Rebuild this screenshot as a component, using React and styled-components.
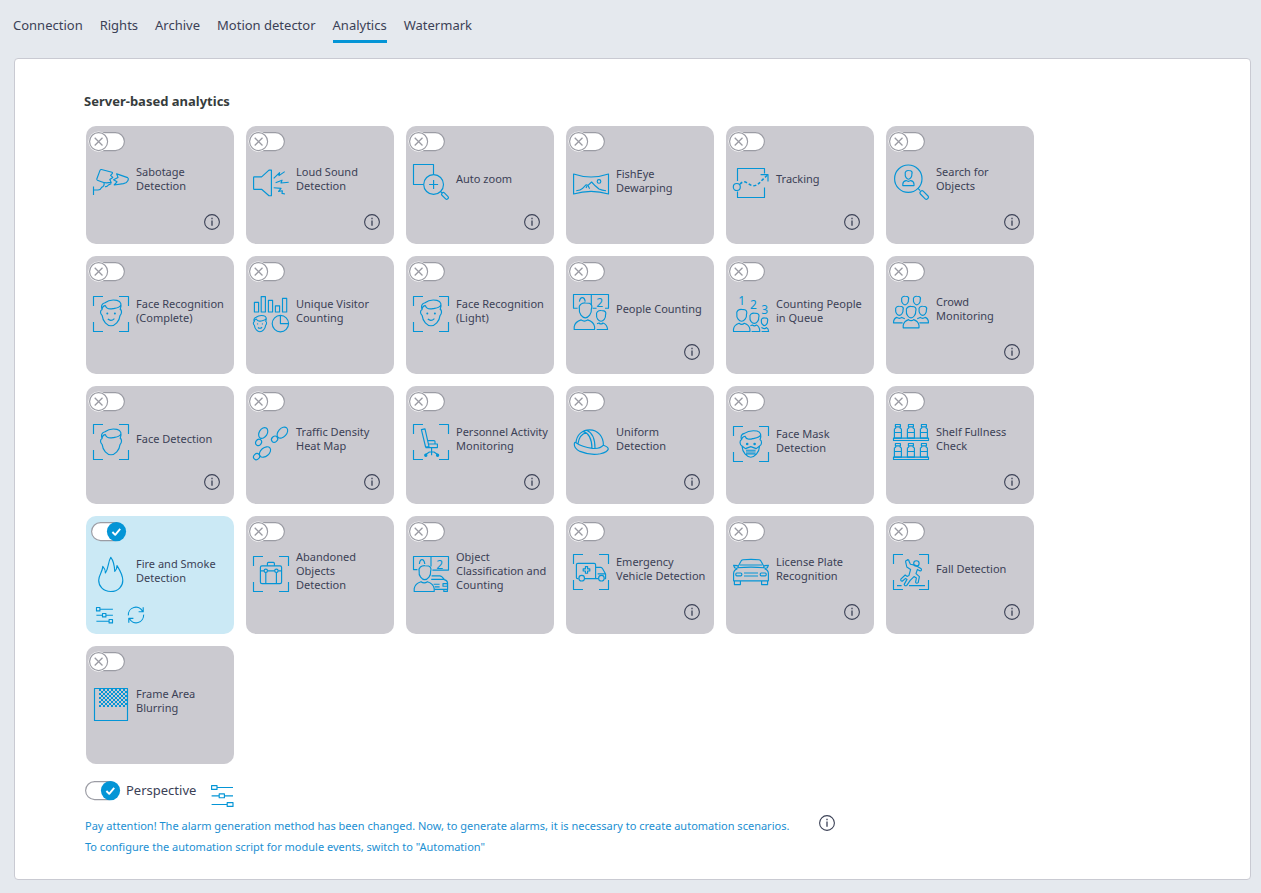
import React, { useState } from "react";
import styled, { createGlobalStyle } from "styled-components";

const color = {
  page: "#e5e9ee",
  panel: "#ffffff",
  border: "#c9cad2",
  card: "#cbcad0",
  cardOn: "#cbe9f5",
  blue: "#0495d6",
  link: "#1b8fd2",
  text: "#3b4156",
  heading: "#363c3c",
  grey: "#9b9ca4",
};

const GlobalStyle = createGlobalStyle`
  *, *::before, *::after { box-sizing: border-box; }
  body {
    margin: 0;
    background: ${color.page};
    color: ${color.text};
    font-family: "Noto Sans", "Open Sans", sans-serif;
    font-size: 13px;
  }
`;

const Page = styled.div`
  display: flex;
  flex-direction: column;
  padding-bottom: 13px;
`;

const Tabs = styled.nav`
  display: flex;
  gap: 17px;
  padding: 10px 13px 15px;
`;

const Tab = styled.a`
  border-bottom: 3px solid ${(p) => (p.$active ? color.blue : "transparent")};
  color: inherit;
  line-height: 30px;
  text-decoration: none;
`;

const Panel = styled.main`
  margin: 0 10px 0 14px;
  padding: 32px 69px 22px;
  background: ${color.panel};
  border: 1px solid ${color.border};
  border-radius: 4px;
`;

const Heading = styled.h1`
  margin: 0 0 15px;
  color: ${color.heading};
  font-size: 13px;
  font-weight: 700;
  line-height: 20px;
`;

const Grid = styled.ul`
  display: grid;
  grid-template-columns: repeat(6, 148px);
  grid-auto-rows: 118px;
  gap: 12px;
  margin: 0;
  padding: 0 2px;
  list-style: none;
`;

const Card = styled.li`
  display: flex;
  flex-direction: column;
  padding: 5px 0 0 2px;
  border-radius: 10px;
  background: ${(p) => (p.$on ? color.cardOn : color.card)};
`;

const CardBody = styled.label`
  display: flex;
  align-items: center;
  gap: 7px;
  min-height: 48px;
  margin-top: ${(p) => (p.$low ? 8 : 6)}px;
  padding-left: 5px;
`;

const CardLabel = styled.span`
  padding-bottom: 6px;
  font-size: 11px;
  line-height: 14px;
  white-space: pre;
`;

const CardFooter = styled.div`
  display: flex;
  justify-content: ${(p) => (p.$tools ? "flex-start" : "flex-end")};
  gap: 14px;
  margin-top: auto;
  padding: ${(p) => (p.$tools ? "0 7px 10px" : "0 13px 13px")};
`;

const IconButton = styled.button`
  display: block;
  padding: 0;
  border: 0;
  background: none;
  color: ${(p) => (p.$dark ? color.text : color.blue)};
  cursor: pointer;
`;

const Svg = styled.svg`
  display: block;
  flex: none;
  overflow: visible;
  fill: none;
  stroke: currentColor;
  stroke-width: 1.15;
  stroke-linejoin: round;
`;

const CardIcon = styled(Svg)`
  color: ${color.blue};
  text {
    fill: currentColor;
    stroke: none;
    font-size: 12px;
    text-anchor: middle;
  }
`;

const Switch = styled.span`
  display: grid;
  width: 38px;
  height: 21px;
  & > * { grid-area: 1 / 1; }
`;

const SwitchInput = styled.input`
  appearance: none;
  width: 38px;
  height: 21px;
  margin: 0;
  cursor: pointer;
`;

const SwitchFace = styled(Svg)`
  pointer-events: none;
`;

const PerspectiveRow = styled.div`
  display: flex;
  align-items: flex-start;
  height: 28px;
  margin: 16px 0 0 -2px;
`;

const PerspectiveLabel = styled.label`
  padding: 0 15px 0 6px;
  line-height: 21px;
`;

const PerspectiveTool = styled.div`
  padding-top: 5px;
`;

const Notice = styled.div`
  display: flex;
  align-items: flex-start;
  gap: 29px;
  margin-top: 6px;
  padding-left: 1px;
`;

const NoticeText = styled.p`
  margin: 0;
  padding-top: 1px;
  color: ${color.link};
  font-size: 11px;
  line-height: 21px;
`;

const NoticeLink = styled.a`
  color: inherit;
  text-decoration: none;
`;

function Toggle({ id, checked, onChange }) {
  return (
    <Switch>
      <SwitchInput id={id} type="checkbox" role="switch" checked={checked} onChange={onChange} />
      <SwitchFace width="38" height="21" viewBox="0 0 38 21" aria-hidden="true">
        <rect x="3.6" y="1.6" width="32.8" height="18" rx="9" fill="#fff" stroke={color.grey} />
        {checked ? (
          <>
            <circle cx="28.5" cy="10.6" r="9.6" fill={color.blue} stroke="none" />
            <path d="M24.4 11l2.8 2.8 5-6" stroke="#fff" strokeWidth="1.9" />
          </>
        ) : (
          <>
            <circle cx="10.6" cy="10.6" r="10.2" fill="#fff" stroke="none" />
            <circle cx="10.6" cy="10.6" r="9" fill="#fff" stroke={color.grey} />
            <path d="M6.7 6.7l7.8 7.8M14.5 6.7l-7.8 7.8" stroke={color.grey} strokeWidth="1.3" />
          </>
        )}
      </SwitchFace>
    </Switch>
  );
}

function InfoIcon() {
  return (
    <Svg width="18" height="18" viewBox="0 0 18 18" aria-hidden="true">
      <circle cx="9" cy="9" r="7.4" strokeWidth="1.1" />
      <path d="M9 7.6v5.2M9 4.8v1.5" strokeWidth="1.3" />
    </Svg>
  );
}

function SlidersIcon() {
  return (
    <Svg width="18" height="18" viewBox="0 0 18 18" aria-hidden="true">
      <path d="M1.5 1.5h3.4v3.4H1.5zM4.9 3.2h13M1.4 9.2h6.1M7.5 7.5h3.4v3.4H7.5zM10.9 9.2h7M1.4 15.2h12.7M14.1 13.5h3.4v3.4h-3.4z" />
    </Svg>
  );
}

function WideSlidersIcon() {
  return (
    <Svg width="23" height="22" viewBox="0 0 23 22" aria-hidden="true">
      <path d="M.6.6h5.4v3.8H.6zM6 2.5h16M.6 10.8h7.6M8.2 8.9h5.2v3.8H8.2zM13.4 10.8H22M.6 19.5h15.6M16.2 17.6H22v3.8h-5.8z" />
    </Svg>
  );
}

function RefreshIcon() {
  return (
    <Svg width="18" height="18" viewBox="0 0 18 18" aria-hidden="true">
      <path d="M1.4 9.4A7.5 7.5 0 0 1 15.6 5.4M16.2 1.2v4.5h-4.6M16.6 8.6A7.5 7.5 0 0 1 2.4 12.6M1.8 16.8v-4.5h4.6" />
    </Svg>
  );
}

const Brackets = () => <path d="M.5 10V.5H10M26 .5h9.5V10M35.5 26v9.5H26M10 35.5H.5V26" />;

function Head({ x, y, w, h }) {
  const at = (u, v) => `${(x + u * w).toFixed(2)} ${(y + v * h).toFixed(2)}`;
  return (
    <path
      d={`M${at(0.06, 0.44)}C${at(-0.02, 0.16)} ${at(0.24, 0.02)} ${at(0.5, 0.03)}C${at(0.62, 0.03)} ${at(0.72, 0.04)} ${at(0.8, 0.06)}C${at(0.98, 0.12)} ${at(1.02, 0.28)} ${at(0.95, 0.44)}C${at(1, 0.72)} ${at(0.72, 1)} ${at(0.5, 1)}S${at(0, 0.72)} ${at(0.06, 0.44)}Z`}
    />
  );
}

function Bust({ x, y, w, h }) {
  const at = (u, v) => `${(x + u * w).toFixed(2)} ${(y + v * h).toFixed(2)}`;
  return (
    <path
      d={`M${at(0, 1)}L${at(0, 0.72)}Q${at(0.04, 0.22)} ${at(0.34, 0.03)}Q${at(0.5, 0.28)} ${at(0.66, 0.03)}Q${at(0.96, 0.22)} ${at(1, 0.72)}L${at(1, 1)}Z`}
    />
  );
}

const FaceOutline = () => (
  <path d="M9 13.8C7.8 10.5 8.6 7.4 12 6.8C15 4.4 20 3.6 24 4.4C28 5.2 29 8.6 27.2 13.4C29 14 29 17.6 27 19.6C26.4 25.4 22 29.7 18 29.7S9.8 25.4 9.2 19.6C7 17.6 7 14.4 9 13.8C9.2 11.8 10.4 9.6 12.4 9.6C13.4 12.6 16.6 13.4 20 12.6C23 12 26.6 12.2 28 8.6" />
);

const Smile = () => (
  <>
    <circle cx="14.3" cy="17.4" r="1" fill="currentColor" stroke="none" />
    <circle cx="21.9" cy="17.4" r="1" fill="currentColor" stroke="none" />
    <path d="M14.8 23q3.2 2.8 6.6-.4" />
  </>
);

const Bottle = ({ x, y }) => (
  <path d={`M${x + 1.4} ${y + 0.5}h5v2.4h-5zM${x + 2} ${y + 2.9}q0 1.4-1.6 2.2v9h7v-9q-1.6-.8-1.6-2.2M${x + 0.4} ${y + 8.5}h7`} />
);

const Shelf = ({ y }) => (
  <>
    <Bottle x={1} y={y} />
    <Bottle x={14} y={y} />
    <Bottle x={27} y={y} />
    <path d={`M.5 ${y + 14.1}V${y + 16.5}h35V${y + 14.1}Z`} />
  </>
);

const art = {
  sabotage: (
    <path d="M8.4 5.5L19 8.2Q19.8 8.6 19.4 9.4L17.6 11.4 19.8 13.4 16.8 15.4 18.2 18.4Q12 19.6 8.4 17.8L4.4 16.2Q3.6 15.8 3.8 15L7 6.4Q7.4 5.4 8.4 5.5ZM11 18.9Q11.8 22 8.6 23.4Q7.4 26 5 26H.5M.5 22.5V31M12 22.4q1.6 1 3.4-1.4l3-1.6M23.6 9.8L26 10.6 34.6 13.6Q36 14.6 35 16.4Q33.8 19 30.4 19.6L21.2 21 24 17.8 20.6 15.8 25 13.4Z" />
  ),
  sound: (
    <path d="M.6 13.5q0-.6.6-.6h7.4l7.4-6.8h2.4v25.6h-2.4l-7.4-6.4H1.2q-.6 0-.6-.6ZM20.7 14.3L26.6 8.6 26 11.6 31.7 7.6M22.6 18.8L29 16.2 28 19 35.7 18.2M20.7 23.8L28 24.4 25.6 27.4 29.4 26.8 29 29.4 32 30" />
  ),
  autoZoom: (
    <>
      <path d="M10.6 20.5H.5V.5h20v9.8M20.6 16v9M16.1 20.5h9M27.7 27.6l1.6 1.6" />
      <circle cx="20.6" cy="20.5" r="9.9" />
      <rect x="28" y="30.2" width="8" height="3.4" rx="1.4" transform="rotate(45 32 31.9)" />
    </>
  ),
  fisheye: (
    <>
      <path d="M.6 8Q18 14 35.5 8V28Q18 22.6.6 28ZM3.2 24.8Q7.6 24.6 9.6 22.4L13 18.8 15 19.4 18.6 16 22.2 19.8 26 23Q29 24.4 33 24.8M15 19.4l1.6 3.4M13 22l1-2" />
      <circle cx="26" cy="15.4" r="1.8" />
    </>
  ),
  tracking: (
    <>
      <path d="M4.5 17V4.5h27v5M4.5 27.5v6h27V23.4M27.6 10.6H35v7" />
      <circle cx="3.8" cy="23" r="3.5" />
      <path d="M7 20.2C12 14 15.4 21.8 20.4 21.8S27 17.4 34.6 11" strokeWidth="1.5" strokeDasharray="3 2" />
    </>
  ),
  search: (
    <>
      <circle cx="15.3" cy="14.7" r="13.7" />
      <Head x={11.8} y={6.2} w={7.4} h={9} />
      <path d="M9.8 21.6v-1.4q0-2.8 3.2-3.6q2.4 1.4 4.8 0q3.2.8 3.2 3.6v1.4ZM25 24.4l2.2 2.2" />
      <rect x="26.2" y="29" width="10" height="4" rx="1.6" transform="rotate(45 31.2 31)" />
    </>
  ),
  faceRecognition: (
    <>
      <Brackets />
      <FaceOutline />
      <Smile />
    </>
  ),
  visitors: (
    <>
      <path d="M1.4 6.4h4.2V16H1.4zM8.2.6h4.2V16H8.2zM15.4 4.4h4.2V16h-4.2zM22.4 9.8h4.2V16h-4.2zM29.5 2.4h4.2V16h-4.2zM27.4 19.4v8.2h8.2" />
      <circle cx="27.4" cy="27.6" r="8.2" />
      <g transform="translate(-4.4 17) scale(.63)" strokeWidth="1.7">
        <FaceOutline />
        <Smile />
      </g>
    </>
  ),
  people: (
    <>
      <path d="M4.6 14.2H.5V.5h35v13.7H32M18.3.5V11M19.6 14.2h4M6.4 7.6q.6-4 2.9-4t2.9 4" />
      <text x="26.8" y="13.2">2</text>
      <Head x={5.6} y={8.4} w={13.4} h={15.4} />
      <Bust x={1.2} y={25.6} w={20.4} h={9.9} />
      <Head x={23} y={16.2} w={10} h={11} />
      <path d="M24 29.8l2-.8q2 2 4 0q4 1.2 4.6 6.5H23.6" />
    </>
  ),
  queue: (
    <>
      <text x="8.6" y="9">1</text>
      <text x="20.4" y="13.4">2</text>
      <text x="31.8" y="18.2">3</text>
      <Head x={3.2} y={13} w={10.8} h={12.2} />
      <Bust x={0.5} y={27} w={16.4} h={8.5} />
      <Head x={16.4} y={16.8} w={9.8} h={10.6} />
      <path d="M17.4 29.8l2-.8q2 1.8 4 0q3.2 1.2 3.4 6.5H18.6" />
      <Head x={28} y={21.6} w={6.8} h={8} />
      <path d="M28.4 31.6q3.4 2 5 0q2.2 1 2.2 3.9h-7" />
    </>
  ),
  crowd: (
    <>
      <Head x={8.2} y={2} w={7.6} h={8.8} />
      <Head x={20} y={2} w={7.6} h={8.8} />
      <Head x={2.2} y={12} w={8.2} h={9.4} />
      <Head x={25.6} y={12} w={8.2} h={9.4} />
      <Head x={12.8} y={12} w={10.4} h={11.8} />
      <Bust x={10.2} y={25.4} w={15.8} h={8.4} />
      <path d="M9.6 28.8H.5Q.6 24.4 3.8 23.4q2.6 1.8 5 0l3 1.4M26.4 28.8h9.1Q35.4 24.4 32.2 23.4q-2.6 1.8-5 0l-3 1.4" />
    </>
  ),
  faceDetection: (
    <>
      <Brackets />
      <g transform="translate(0 1)">
        <FaceOutline />
      </g>
    </>
  ),
  traffic: (
    <>
      <ellipse cx="10.2" cy="9" rx="4" ry="5.8" transform="rotate(32 10.2 9)" />
      <ellipse cx="5.6" cy="18.4" rx="2.8" ry="3.3" transform="rotate(32 5.6 18.4)" />
      <ellipse cx="29.4" cy="8.6" rx="4.2" ry="6.4" transform="rotate(42 29.4 8.6)" />
      <ellipse cx="21.6" cy="15.2" rx="2.8" ry="3.3" transform="rotate(50 21.6 15.2)" />
      <ellipse cx="12" cy="28" rx="4.2" ry="6.4" transform="rotate(50 12 28)" />
      <ellipse cx="3.6" cy="32.6" rx="2.8" ry="3.3" transform="rotate(45 3.6 32.6)" />
    </>
  ),
  chair: (
    <>
      <Brackets />
      <path d="M8.4 5.6L12 4.9 16 22.6 12.6 23ZM14.6 16.6h6.4q1 0 1 1v2.4M15.4 20h9v3.6H12.6M18.6 23.6v7.6M12.8 30.4l3.6-2.4h4.6l3.6 2.4" />
      <circle cx="12.8" cy="31.2" r="1.1" fill="currentColor" />
      <circle cx="24.6" cy="31.2" r="1.1" fill="currentColor" />
    </>
  ),
  helmet: (
    <path d="M3 18.8C3.6 10.4 9.8 5.8 16.6 5.8C25 5.8 30.6 12.8 30.4 21.2M1.3 20Q1.4 17.6 3 18.8Q9 23 19.4 24.4Q27 25.2 30.4 21.2Q35.2 22.8 35.3 25Q34.6 28 27.4 29.8Q17 31.6 7 27.4Q1 24.6 1.3 20M10.4 7.6Q18.6 9.8 19 24.2M13.6 6.2Q22 9.4 22 24.4M5 19.8Q6.2 10.4 13.4 8.6" />
  ),
  mask: (
    <>
      <Brackets />
      <path d="M8.4 13.8C7.4 10.4 8.4 8 11.4 7.4C14.6 5 20 4.4 24 5C28 6 28.6 9.4 27 13.8C29.2 14.6 29 19 26.6 20C26.2 27 21.4 31.2 17.8 31.2S9.4 27 9 20C6.6 19 6.4 14.6 8.4 13.8C8.8 11.6 10 10.4 12 10.2C13 13.2 16.6 13.8 19.6 12.6C22.6 12 26.4 12 27.6 9M9 20L12.4 22.6 17.8 20.6 23.2 22.6 26.6 20M13 24.2h9.6M13 26h9.6M13 27.8h9.6" />
      <circle cx="14.2" cy="18" r=".7" fill="currentColor" />
      <circle cx="21.6" cy="18" r=".7" fill="currentColor" />
    </>
  ),
  shelf: (
    <>
      <Shelf y={0} />
      <Shelf y={19} />
    </>
  ),
  fire: (
    <path d="M17.8 35.5C9.8 35.5 5.6 29.6 5.7 24.2C5.8 18.4 9.4 16.6 9.8 10.4C11.8 12.4 12.4 14.4 12.4 17C15.6 12.4 14.8 6.4 17.8 1.3C20.8 5 21.4 9.2 21.8 15.4C23.6 13.8 24 11.8 24 9.6C26.8 14 29.8 19 29.8 24.4C29.8 30 25.4 35.5 17.8 35.5Z" />
  ),
  suitcase: (
    <>
      <Brackets />
      <rect x="7.4" y="9.8" width="21.2" height="17.8" rx="1.6" />
      <path d="M14.4 9.8V7.4q0-1 1-1h5q1 0 1 1v2.4M7.4 14.8h3.6M14.6 14.8h7.2M25.2 14.8h3.4M12.8 16.6v11M23.4 16.6v11" />
      <circle cx="12.8" cy="14.8" r="1.7" />
      <circle cx="23.4" cy="14.8" r="1.7" />
    </>
  ),
  classification: (
    <>
      <path d="M4.4 13.6H.5V.5h35v13.6H19.4M18 .5v10M6.4 8q.4-4.4 2.6-4.4T11.8 8" />
      <text x="26.8" y="13.2">2</text>
      <Head x={5.4} y={9.2} w={12.8} h={14.4} />
      <Bust x={1.2} y={25.4} w={20} h={10.1} />
      <path d="M18.6 19.8h8.2q2 0 4.4 3.6h-13M30.8 23.4q3.6 1 3.8 3.6v6.4H21.4M30.8 33.4v2h3.6v-2M20.6 28.2h6M21.6 30.8h5M30 27.6h4.4v2.6H30z" />
    </>
  ),
  emergency: (
    <>
      <Brackets />
      <path d="M5.4 24.6H4.4q-1 0-1-1V10.8q0-1.4 1.4-1.4h16.4q1.4 0 1.4 1.4v13.8H12M22.6 13.4h5.2q1 0 1.8 1.4l3 5.2v4.6h-1M22.6 24.6h2.4M24.6 19.8h7.6M12.4 12.6h2.2v2.2h2.2V17h-2.2v2.2h-2.2V17h-2.2v-2.2h2.2z" />
      <circle cx="8.7" cy="24.2" r="2.8" />
      <circle cx="28.4" cy="24.2" r="2.8" />
    </>
  ),
  car: (
    <>
      <path d="M4.6 13.6L7.8 7.4Q8.4 6 10 5.8Q18 4.8 26 5.8Q27.6 6 28.2 7.4L31.4 13.6M7 11h22M4.4 13.8q13.6-1.2 27.2 0M4.4 14.6L1.6 13.8.6 11.4 4.8 11.6M31.6 14.6l2.8-.8 1-2.4-4.2.2M4.4 14.6Q.6 16.2.6 19.4V26.8h34.8V19.4q0-3.2-3.8-4.8M1.4 26.8v3.8h6v-3.8M28.6 26.8v3.8h6v-3.8M11 19h14M11 22h14" />
      <rect x="2.8" y="19" width="6" height="2.8" rx="1" />
      <rect x="27.2" y="19" width="6" height="2.8" rx="1" />
    </>
  ),
  fall: (
    <>
      <Brackets />
      <circle cx="23.4" cy="9.4" r="2.7" />
      <path d="M4 31.6h4.6M16 31.6h16M14.6 6.2q-1.8-.2-2 1.4l1.2 5.4 3.8 2.4-1.6 6-2 1-1.8-1.4-4.4 4.2q-.4 1.8 1.4 2l3.4-2.8 1.4 1-2.8 5q.4 2 2.6 1l3.4-5 3.8-3.8 2.4 1.4-.8 4.2q1 1.8 2.6.4l1.2-6-3.4-3 1.4-4.2 2.8 1.6q1.8-.4 1-2.2l-5.4-3.4-5.4-1.2-1.4-3q.2-1.4-1.4-1.6z" />
    </>
  ),
  blur: (
    <>
      <defs>
        <pattern id="checks" width="4" height="4" patternUnits="userSpaceOnUse" x="6" y="3">
          <path d="M0 0h2v2H0zM2 2h2v2H2z" fill={color.blue} stroke="none" />
        </pattern>
      </defs>
      <rect x="6" y="3" width="28" height="18" fill="url(#checks)" stroke="none" />
      <path d="M1.5 2.5h33v32h-33z" />
    </>
  ),
};

const modules = [
  { icon: "sabotage", name: "Sabotage\nDetection", info: true },
  { icon: "sound", name: "Loud Sound\nDetection", info: true },
  { icon: "autoZoom", name: "Auto zoom", info: true },
  { icon: "fisheye", name: "FishEye\nDewarping" },
  { icon: "tracking", name: "Tracking", info: true },
  { icon: "search", name: "Search for\nObjects", info: true },
  { icon: "faceRecognition", name: "Face Recognition\n(Complete)" },
  { icon: "visitors", name: "Unique Visitor\nCounting" },
  { icon: "faceRecognition", name: "Face Recognition\n(Light)" },
  { icon: "people", name: "People Counting", info: true },
  { icon: "queue", name: "Counting People\nin Queue" },
  { icon: "crowd", name: "Crowd\nMonitoring", info: true },
  { icon: "faceDetection", name: "Face Detection", info: true },
  { icon: "traffic", name: "Traffic Density\nHeat Map", info: true },
  { icon: "chair", name: "Personnel Activity\nMonitoring", info: true },
  { icon: "helmet", name: "Uniform\nDetection", info: true },
  { icon: "mask", name: "Face Mask\nDetection" },
  { icon: "shelf", name: "Shelf Fullness\nCheck", info: true },
  { icon: "fire", name: "Fire and Smoke\nDetection", on: true },
  { icon: "suitcase", name: "Abandoned\nObjects\nDetection" },
  { icon: "classification", name: "Object\nClassification and\nCounting" },
  { icon: "emergency", name: "Emergency\nVehicle Detection", info: true },
  { icon: "car", name: "License Plate\nRecognition", info: true },
  { icon: "fall", name: "Fall Detection", info: true },
  { icon: "blur", name: "Frame Area\nBlurring" },
];

const tabs = ["Connection", "Rights", "Archive", "Motion detector", "Analytics", "Watermark"];

function ModuleCard({ id, icon, name, info, on: initiallyOn = false }) {
  const [on, setOn] = useState(initiallyOn);
  return (
    <Card $on={on}>
      <Toggle id={id} checked={on} onChange={() => setOn(!on)} />
      <CardBody htmlFor={id} $low={!info}>
        <CardIcon width="36" height="36" viewBox="0 0 36 36" aria-hidden="true">
          {art[icon]}
        </CardIcon>
        <CardLabel>{name}</CardLabel>
      </CardBody>
      {info && (
        <CardFooter>
          <IconButton $dark type="button" aria-label="Information">
            <InfoIcon />
          </IconButton>
        </CardFooter>
      )}
      {on && !info && (
        <CardFooter $tools>
          <IconButton type="button" aria-label="Settings">
            <SlidersIcon />
          </IconButton>
          <IconButton type="button" aria-label="Restart">
            <RefreshIcon />
          </IconButton>
        </CardFooter>
      )}
    </Card>
  );
}

export default function App() {
  const [perspective, setPerspective] = useState(true);
  return (
    <Page>
      <GlobalStyle />
      <Tabs>
        {tabs.map((tab) => (
          <Tab key={tab} href="#" $active={tab === "Analytics"}>
            {tab}
          </Tab>
        ))}
      </Tabs>
      <Panel>
        <Heading>Server-based analytics</Heading>
        <Grid>
          {modules.map((module, index) => (
            <ModuleCard key={module.name} id={`module-${index}`} {...module} />
          ))}
        </Grid>
        <PerspectiveRow>
          <Toggle id="perspective" checked={perspective} onChange={() => setPerspective(!perspective)} />
          <PerspectiveLabel htmlFor="perspective">Perspective</PerspectiveLabel>
          <PerspectiveTool>
            <IconButton type="button" aria-label="Perspective settings">
              <WideSlidersIcon />
            </IconButton>
          </PerspectiveTool>
        </PerspectiveRow>
        <Notice>
          <NoticeText>
            Pay attention! The alarm generation method has been changed. Now, to generate alarms, it is necessary to create automation scenarios.
            <br />
            <NoticeLink href="#">To configure the automation script for module events, switch to "Automation"</NoticeLink>
          </NoticeText>
          <IconButton $dark type="button" aria-label="Information">
            <InfoIcon />
          </IconButton>
        </Notice>
      </Panel>
    </Page>
  );
}
